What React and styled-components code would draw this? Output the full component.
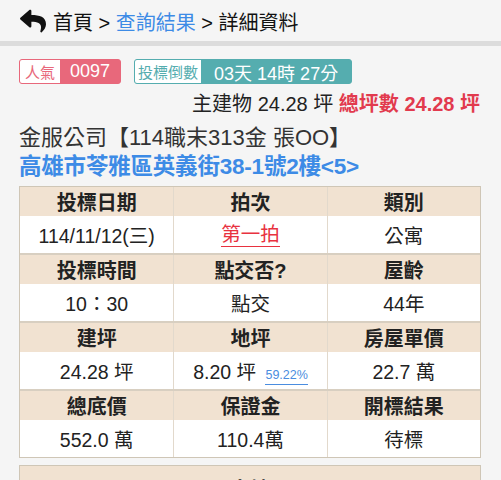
import React from 'react';
import styled, { createGlobalStyle } from 'styled-components';
import { FaReply } from 'react-icons/fa';

const GlobalStyle = createGlobalStyle`
    body {
        margin: 0;
        background: #f5f5f5;
        font-family: "Liberation Sans", "Noto Sans CJK TC", sans-serif;
        color: #222;
    }
`;

const getRows = () => [
    {
        heads: ['投標日期', '拍次', '類別'],
        values: ['114/11/12(三)', <Underlined key="r" $color="#e8323f">第一拍</Underlined>, '公寓'],
    },
    {
        heads: ['投標時間', '點交否?', '屋齡'],
        values: ['10：30', '點交', '44年'],
    },
    {
        heads: ['建坪', '地坪', '房屋單價'],
        values: ['24.28 坪', <span key="l">8.20 坪 <Ratio>59.22%</Ratio></span>, '22.7 萬'],
    },
    {
        heads: ['總底價', '保證金', '開標結果'],
        values: ['552.0 萬', '110.4萬', '待標'],
    },
];

export default function App() {
    const rows = getRows();
    return (
        <>
            <GlobalStyle />
            <Header>
                <FaReply size={26} color="#111" />
                <Crumbs>
                    首頁 &gt; <CrumbLink>查詢結果</CrumbLink> &gt; 詳細資料
                </Crumbs>
            </Header>
            <Divider />
            <Content>
                <BadgeRow>
                    <Badge $color="#e8687b">
                        <BadgeLabel $color="#e8687b">人氣</BadgeLabel>
                        <BadgeValue>0097</BadgeValue>
                    </Badge>
                    <Badge $color="#55adaf">
                        <BadgeLabel $color="#55adaf" $tight>投標倒數</BadgeLabel>
                        <BadgeValue $wide>03天 14時 27分</BadgeValue>
                    </Badge>
                </BadgeRow>
                <AreaLine>
                    主建物 24.28 坪 <Total>總坪數 24.28 坪</Total>
                </AreaLine>
                <Title>金服公司【114職末313金 張OO】</Title>
                <Address>高雄市苓雅區英義街38-1號2樓&lt;5&gt;</Address>
                <Table>
                    {rows.map((row, i) => (
                        <Group key={i} $first={i === 0}>
                            {row.heads.map((h) => (
                                <HeadCell key={h}>{h}</HeadCell>
                            ))}
                            {row.values.map((v, j) => (
                                <ValueCell key={j}>{v}</ValueCell>
                            ))}
                        </Group>
                    ))}
                </Table>
                <NextBox>
                    <NextTitle>土地</NextTitle>
                </NextBox>
            </Content>
        </>
    );
}

const Header = styled.div`
    height: 41px;
    display: flex;
    align-items: center;
    gap: 7px;
    padding-left: 20px;
`;

const Crumbs = styled.div`
    font-size: 20px;
    color: #111;
    padding-top: 1px;
`;

const CrumbLink = styled.span`
    color: #3d8be6;
`;

const Divider = styled.div`
    height: 5px;
    background: #dcdcdc;
`;

const Content = styled.div`
    padding: 0 20px 0 19px;
`;

const BadgeRow = styled.div`
    display: flex;
    gap: 13px;
    margin-top: 13px;
`;

const Badge = styled.div`
    display: flex;
    height: 25px;
    border: 1px solid ${(p) => p.$color};
    border-radius: 3px;
    background: ${(p) => p.$color};
    box-sizing: border-box;
    overflow: hidden;
`;

const BadgeLabel = styled.div`
    background: #fff;
    color: ${(p) => p.$color};
    font-size: 15px;
    padding: 0 ${(p) => (p.$tight ? '3px' : '5px')};
    display: flex;
    align-items: center;
`;

const BadgeValue = styled.div`
    color: #fff;
    font-size: 18px;
    padding: 0 ${(p) => (p.$wide ? '13px' : '10px')};
    display: flex;
    align-items: center;
`;

const AreaLine = styled.div`
    margin-top: 8px;
    text-align: right;
    font-size: 20px;
    line-height: 24px;
    padding-right: 1px;
`;

const Total = styled.span`
    color: #e23a4e;
    font-weight: bold;
`;

const Title = styled.div`
    margin-top: 7px;
    font-size: 22px;
    line-height: 29px;
    color: #333;
`;

const Address = styled.div`
    font-size: 22.5px;
    line-height: 29px;
    letter-spacing: -0.2px;
    color: #3d8be6;
    font-weight: bold;
`;

const Table = styled.div`
    margin-top: 5px;
    border: 1px solid #cfc6b6;
    background: #fff;
`;

const Group = styled.div`
    display: grid;
    grid-template-columns: 1fr 1fr 1fr;
    border-top: ${(p) => (p.$first ? 'none' : '2px solid #d8cfc1')};
`;

const Cell = styled.div`
    display: flex;
    align-items: center;
    justify-content: center;
    color: #222;
    border-left: 1px solid #e2d9cc;
    &:nth-child(3n + 1) {
        border-left: none;
    }
`;

const HeadCell = styled(Cell)`
    height: 29px;
    background: #f1e2d1;
    font-size: 20px;
    font-weight: bold;
`;

const ValueCell = styled(Cell)`
    height: 37px;
    font-size: 19.5px;
`;

const Underlined = styled.span`
    color: ${(p) => p.$color};
    border-bottom: 1px solid ${(p) => p.$color};
    line-height: 24px;
`;

const Ratio = styled.span`
    font-size: 12.5px;
    color: #4a8de0;
    border-bottom: 1px solid #4a8de0;
    margin-left: 4px;
    padding-bottom: 2px;
`;

const NextBox = styled.div`
    margin-top: 7px;
    height: 40px;
    border: 1px solid #cfc6b6;
    background: #f1e2d1;
    display: flex;
    justify-content: center;
`;

const NextTitle = styled.div`
    font-size: 20px;
    font-weight: bold;
    margin-top: 8px;
`;
